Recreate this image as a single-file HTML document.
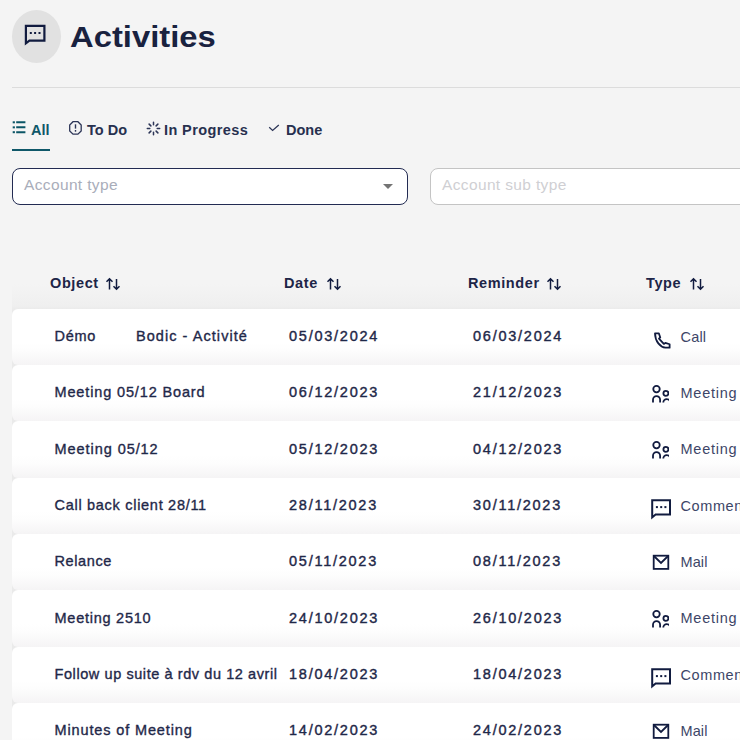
<!DOCTYPE html>
<html><head><meta charset="utf-8">
<style>
*{margin:0;padding:0;box-sizing:border-box}
html,body{width:740px;height:740px;overflow:hidden;background:#f4f4f4;font-family:"Liberation Sans",sans-serif;color:#1d2547}
.a{position:absolute;white-space:nowrap;line-height:1}
.circle{left:12px;top:10px;width:49px;height:53px;border-radius:50%;background:#e1e1e1}
.title{left:70px;top:23px;font-size:29px;font-weight:bold;color:#19223f;transform:scaleX(1.13);transform-origin:0 0}
.hr{left:12px;top:87px;width:728px;height:1px;background:#dcdcdc}
.tab{top:123px;font-size:14.5px;font-weight:bold;color:#27304f}
.tab.act{color:#0f5869}
.uline{left:12px;top:149px;width:38px;height:2px;background:#0f5869}
.sel{top:168px;height:37px;border-radius:8px;background:#fff}
.sel1{left:12px;width:396px;border:1px solid #222b52}
.sel2{left:430px;width:330px;border:1px solid #c4c4c4}
.ph{top:177px;font-size:15.5px;letter-spacing:0.36px}
.th{top:276px;font-size:14.5px;font-weight:bold;color:#1d2547;letter-spacing:0.6px}
.row{left:12px;width:740px;height:56.3px;border-radius:6px;background:linear-gradient(#fff 60%,#fdfdfd 74%,#f5f4f5)}
.cell{font-size:14.5px;color:#1f2849;letter-spacing:0.68px;-webkit-text-stroke:0.35px #1f2849}
.dt{font-size:14.5px;color:#1f2849;letter-spacing:1.75px;-webkit-text-stroke:0.4px #1f2849}
.ty{font-size:14.5px;color:#3d4668;letter-spacing:0.1px}
</style></head><body>
<div class="a circle"></div>
<svg class="a" style="left:0;top:0;overflow:visible" width="60" height="60" viewBox="0 0 60 60"><path d="M25.9 25.8H44.4V40.6H29.4L25.9 43.3Z" fill="none" stroke="#111b3f" stroke-width="2.2" stroke-linejoin="miter" stroke-miterlimit="10"/><rect x="29.8" y="32" width="2" height="2" fill="#111b3f"/><rect x="34.1" y="32" width="2" height="2" fill="#111b3f"/><rect x="38.5" y="32" width="2" height="2" fill="#111b3f"/></svg>
<div class="a title">Activities</div>
<div class="a hr"></div>

<svg class="a" style="left:12px;top:121px;overflow:visible" width="14" height="13" viewBox="0 0 14 13"><rect x="0.7" y="0.3" width="2.2" height="2" fill="#0b5566"/><rect x="0.7" y="5.35" width="2.2" height="2" fill="#0b5566"/><rect x="0.7" y="10.2" width="2.2" height="2" fill="#0b5566"/><path d="M4.2 1.3H13.4M4.2 6.35H13.4M4.2 11.2H13.4" stroke="#0b5566" stroke-width="2"/></svg>
<div class="a tab act" style="left:31px">All</div>
<svg class="a" style="left:69px;top:121px;overflow:visible" width="13" height="14" viewBox="0 0 13 14"><path d="M4 0.7H8.9L12.2 4V9.9L8.9 13.2H4L0.7 9.9V4Z" fill="none" stroke="#2c3557" stroke-width="1.3"/><path d="M6.5 3.3V7.6" stroke="#2c3557" stroke-width="1.4"/><rect x="5.8" y="9" width="1.4" height="1.7" fill="#2c3557"/></svg>
<div class="a tab" style="left:87px">To Do</div>
<svg class="a" style="left:146px;top:121px;overflow:visible" width="15" height="15" viewBox="0 0 15 15"><g stroke="#2c3557" stroke-width="1.5" stroke-linecap="round"><path d="M7.5 1.3V3.8M7.5 11.2V13.7M1.3 7.5H3.8M11.2 7.5H13.7M3.1 3.1L4.9 4.9M10.1 10.1L11.9 11.9M3.1 11.9L4.9 10.1M10.1 4.9L11.9 3.1"/></g></svg>
<div class="a tab" style="left:164px;letter-spacing:0.4px">In Progress</div>
<svg class="a" style="left:268px;top:123px;overflow:visible" width="12" height="9" viewBox="0 0 12 9"><path d="M1.2 4.3L4.6 7.4L10.8 1.9" fill="none" stroke="#2c3557" stroke-width="1.3"/></svg>
<div class="a tab" style="left:286px">Done</div>
<div class="a uline"></div>

<div class="a sel sel1"></div>
<div class="a ph" style="left:24px;color:#a9adba">Account type</div>
<div class="a" style="left:383px;top:184px;width:0;height:0;border-left:5px solid transparent;border-right:5px solid transparent;border-top:5px solid #747474"></div>
<div class="a sel sel2"></div>
<div class="a ph" style="left:442px;color:#cfcfd3">Account sub type</div>

<div class="a" style="left:12px;top:284px;width:728px;height:456px;background:linear-gradient(#f4f4f4,#efefef 22px,#eaeaea 26px)"></div>
<div class="a th" style="left:50px">Object</div><svg class="a" style="left:106px;top:277.5px;overflow:visible" width="14" height="13" viewBox="0 0 14 13"><path d="M3.5 0.8V11.5M0.5 3.8L3.5 0.8L6.5 3.8M10.5 1V11.3M7.5 8.3L10.5 11.3L13.5 8.3" fill="none" stroke="#111b3f" stroke-width="1.5"/></svg>
<div class="a th" style="left:284px">Date</div><svg class="a" style="left:327px;top:277.5px;overflow:visible" width="14" height="13" viewBox="0 0 14 13"><path d="M3.5 0.8V11.5M0.5 3.8L3.5 0.8L6.5 3.8M10.5 1V11.3M7.5 8.3L10.5 11.3L13.5 8.3" fill="none" stroke="#111b3f" stroke-width="1.5"/></svg>
<div class="a th" style="left:468px">Reminder</div><svg class="a" style="left:547px;top:277.5px;overflow:visible" width="14" height="13" viewBox="0 0 14 13"><path d="M3.5 0.8V11.5M0.5 3.8L3.5 0.8L6.5 3.8M10.5 1V11.3M7.5 8.3L10.5 11.3L13.5 8.3" fill="none" stroke="#111b3f" stroke-width="1.5"/></svg>
<div class="a th" style="left:646px">Type</div><svg class="a" style="left:690px;top:277.5px;overflow:visible" width="14" height="13" viewBox="0 0 14 13"><path d="M3.5 0.8V11.5M0.5 3.8L3.5 0.8L6.5 3.8M10.5 1V11.3M7.5 8.3L10.5 11.3L13.5 8.3" fill="none" stroke="#111b3f" stroke-width="1.5"/></svg>

<div class="a row" style="top:308.8px"></div>
<div class="a cell" style="left:54.5px;top:329.1px">Démo</div>
<div class="a cell" style="left:136px;top:329.1px;letter-spacing:1.05px">Bodic - Activité</div>
<div class="a dt" style="left:289px;top:329.1px">05/03/2024</div>
<div class="a dt" style="left:473px;top:329.1px">06/03/2024</div>
<svg class="a" style="left:646px;top:308.8px;overflow:visible" width="30" height="45" viewBox="0 0 30 45"><path d="M9 24.47H12.9L14.27 28.44L12.97 29.66L17.84 34.93L19.38 33.9L23.63 35.25V38.7H19.46C14.2 38.2 9.2 32.5 9 24.47Z" fill="none" stroke="#111b3f" stroke-width="1.8" stroke-linejoin="round"/></svg>
<div class="a ty" style="left:680.5px;top:329.9px;letter-spacing:0.2px">Call</div>
<div class="a row" style="top:365.09px"></div>
<div class="a cell" style="left:54.5px;top:385.39px;letter-spacing:0.86px">Meeting 05/12 Board</div>
<div class="a dt" style="left:289px;top:385.39px">06/12/2023</div>
<div class="a dt" style="left:473px;top:385.39px">21/12/2023</div>
<svg class="a" style="left:646px;top:365.09px;overflow:visible" width="30" height="45" viewBox="0 0 30 45"><defs><clipPath id="cm365"><rect x="0" y="0" width="22.9" height="45"/></clipPath></defs><g clip-path="url(#cm365)" fill="none" stroke="#111b3f" stroke-width="1.8"><circle cx="10.5" cy="24.1" r="3.25"/><path d="M7 37.6V34.65A3.55 3.55 0 0 1 14.1 34.65V37.6"/><circle cx="19.9" cy="28.3" r="2.5"/><path d="M17.3 37.6V37.5A3.4 3.4 0 0 1 24.1 37.5V37.6"/></g></svg>
<div class="a ty" style="left:680.5px;top:386.19px;letter-spacing:0.75px">Meeting</div>
<div class="a row" style="top:421.38px"></div>
<div class="a cell" style="left:54.5px;top:441.68px;letter-spacing:0.94px">Meeting 05/12</div>
<div class="a dt" style="left:289px;top:441.68px">05/12/2023</div>
<div class="a dt" style="left:473px;top:441.68px">04/12/2023</div>
<svg class="a" style="left:646px;top:421.38px;overflow:visible" width="30" height="45" viewBox="0 0 30 45"><defs><clipPath id="cm421"><rect x="0" y="0" width="22.9" height="45"/></clipPath></defs><g clip-path="url(#cm421)" fill="none" stroke="#111b3f" stroke-width="1.8"><circle cx="10.5" cy="24.1" r="3.25"/><path d="M7 37.6V34.65A3.55 3.55 0 0 1 14.1 34.65V37.6"/><circle cx="19.9" cy="28.3" r="2.5"/><path d="M17.3 37.6V37.5A3.4 3.4 0 0 1 24.1 37.5V37.6"/></g></svg>
<div class="a ty" style="left:680.5px;top:442.48px;letter-spacing:0.75px">Meeting</div>
<div class="a row" style="top:477.67px"></div>
<div class="a cell" style="left:54.5px;top:497.97px;letter-spacing:0.71px">Call back client 28/11</div>
<div class="a dt" style="left:289px;top:497.97px">28/11/2023</div>
<div class="a dt" style="left:473px;top:497.97px">30/11/2023</div>
<svg class="a" style="left:646px;top:477.67px;overflow:visible" width="30" height="45" viewBox="0 0 30 45"><path d="M6.2 22.3H24V36.5H9.6L6.2 39.4Z" fill="none" stroke="#111b3f" stroke-width="2" stroke-linejoin="miter" stroke-miterlimit="10"/><rect x="9.9" y="28.1" width="2" height="2" fill="#111b3f"/><rect x="14.2" y="28.1" width="2" height="2" fill="#111b3f"/><rect x="18.4" y="28.1" width="2" height="2" fill="#111b3f"/></svg>
<div class="a ty" style="left:680.5px;top:498.77px;letter-spacing:0.6px">Comment</div>
<div class="a row" style="top:533.96px"></div>
<div class="a cell" style="left:54.5px;top:554.26px;letter-spacing:0.6px">Relance</div>
<div class="a dt" style="left:289px;top:554.26px">05/11/2023</div>
<div class="a dt" style="left:473px;top:554.26px">08/11/2023</div>
<svg class="a" style="left:646px;top:533.96px;overflow:visible" width="30" height="45" viewBox="0 0 30 45"><rect x="7.7" y="21.7" width="14.6" height="13.2" fill="none" stroke="#111b3f" stroke-width="1.8"/><path d="M7.9 22L15 29L22.1 22" fill="none" stroke="#111b3f" stroke-width="1.8"/></svg>
<div class="a ty" style="left:680.5px;top:555.06px;letter-spacing:0.1px">Mail</div>
<div class="a row" style="top:590.25px"></div>
<div class="a cell" style="left:54.5px;top:610.55px;letter-spacing:0.75px">Meeting 2510</div>
<div class="a dt" style="left:289px;top:610.55px">24/10/2023</div>
<div class="a dt" style="left:473px;top:610.55px">26/10/2023</div>
<svg class="a" style="left:646px;top:590.25px;overflow:visible" width="30" height="45" viewBox="0 0 30 45"><defs><clipPath id="cm590"><rect x="0" y="0" width="22.9" height="45"/></clipPath></defs><g clip-path="url(#cm590)" fill="none" stroke="#111b3f" stroke-width="1.8"><circle cx="10.5" cy="24.1" r="3.25"/><path d="M7 37.6V34.65A3.55 3.55 0 0 1 14.1 34.65V37.6"/><circle cx="19.9" cy="28.3" r="2.5"/><path d="M17.3 37.6V37.5A3.4 3.4 0 0 1 24.1 37.5V37.6"/></g></svg>
<div class="a ty" style="left:680.5px;top:611.35px;letter-spacing:0.75px">Meeting</div>
<div class="a row" style="top:646.54px"></div>
<div class="a cell" style="left:54.5px;top:666.84px;letter-spacing:0.58px">Follow up suite à rdv du 12 avril</div>
<div class="a dt" style="left:289px;top:666.84px">18/04/2023</div>
<div class="a dt" style="left:473px;top:666.84px">18/04/2023</div>
<svg class="a" style="left:646px;top:646.54px;overflow:visible" width="30" height="45" viewBox="0 0 30 45"><path d="M6.2 22.3H24V36.5H9.6L6.2 39.4Z" fill="none" stroke="#111b3f" stroke-width="2" stroke-linejoin="miter" stroke-miterlimit="10"/><rect x="9.9" y="28.1" width="2" height="2" fill="#111b3f"/><rect x="14.2" y="28.1" width="2" height="2" fill="#111b3f"/><rect x="18.4" y="28.1" width="2" height="2" fill="#111b3f"/></svg>
<div class="a ty" style="left:680.5px;top:667.64px;letter-spacing:0.6px">Comment</div>
<div class="a row" style="top:702.83px"></div>
<div class="a cell" style="left:54.5px;top:723.13px;letter-spacing:0.87px">Minutes of Meeting</div>
<div class="a dt" style="left:289px;top:723.13px">14/02/2023</div>
<div class="a dt" style="left:473px;top:723.13px">24/02/2023</div>
<svg class="a" style="left:646px;top:702.83px;overflow:visible" width="30" height="45" viewBox="0 0 30 45"><rect x="7.7" y="21.7" width="14.6" height="13.2" fill="none" stroke="#111b3f" stroke-width="1.8"/><path d="M7.9 22L15 29L22.1 22" fill="none" stroke="#111b3f" stroke-width="1.8"/></svg>
<div class="a ty" style="left:680.5px;top:723.93px;letter-spacing:0.1px">Mail</div>
</body></html>
